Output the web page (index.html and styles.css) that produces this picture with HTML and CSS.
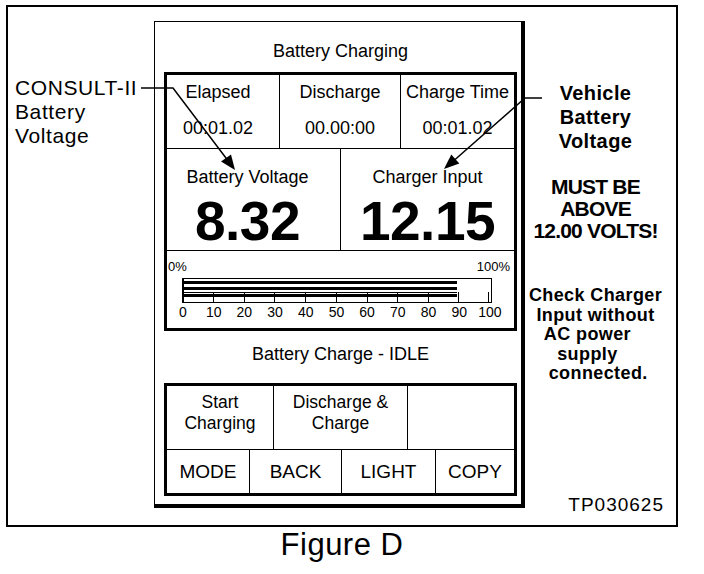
FILE: index.html
```html
<!DOCTYPE html>
<html lang="en">
<head>
    <meta charset="UTF-8">
    <title>Figure D - Battery Charging</title>
    <link rel="stylesheet" href="styles.css">
</head>
<body>
<div class="page">
    <div class="sheet">
        <div class="callout-left">CONSULT-II<br>Battery<br>Voltage</div>

        <div class="device">
            <div class="screen-title">Battery Charging</div>

            <div class="panel readings">
                <div class="timers">
                    <div class="cell timer first">
                        <div class="label">Elapsed</div>
                        <div class="value">00:01.02</div>
                    </div>
                    <div class="cell timer">
                        <div class="label">Discharge</div>
                        <div class="value">00.00:00</div>
                    </div>
                    <div class="cell timer">
                        <div class="label">Charge Time</div>
                        <div class="value">00:01.02</div>
                    </div>
                </div>
                <div class="volts">
                    <div class="cell volt first">
                        <div class="label">Battery Voltage</div>
                        <div class="big">8.32</div>
                    </div>
                    <div class="cell volt">
                        <div class="label">Charger Input</div>
                        <div class="big">12.15</div>
                    </div>
                </div>
                <div class="progress">
                    <div class="pct"><span>0%</span><span>100%</span></div>
                    <svg class="bar" width="310" height="25" viewBox="0 0 310 25">
                        <rect x="0.5" y="0.5" width="309" height="24" fill="none" stroke="#000" stroke-width="1"/>
                        <line x1="1.5" y1="1" x2="1.5" y2="24" stroke="#000" stroke-width="1"/>
                        <rect x="2" y="3" width="273" height="3" fill="#000"/>
                        <rect x="2" y="9" width="273" height="3" fill="#000"/>
                        <rect x="2" y="14" width="273" height="1" fill="#000"/>
                        <rect x="2" y="16" width="273" height="3" fill="#000"/>
                        <g stroke="#000" stroke-width="1">
                            <line x1="31.5" y1="14" x2="31.5" y2="24"/>
                            <line x1="62.5" y1="14" x2="62.5" y2="24"/>
                            <line x1="92.5" y1="14" x2="92.5" y2="24"/>
                            <line x1="123.5" y1="14" x2="123.5" y2="24"/>
                            <line x1="154.5" y1="14" x2="154.5" y2="24"/>
                            <line x1="185.5" y1="14" x2="185.5" y2="24"/>
                            <line x1="215.5" y1="14" x2="215.5" y2="24"/>
                            <line x1="246.5" y1="14" x2="246.5" y2="24"/>
                            <line x1="276.5" y1="14" x2="276.5" y2="24"/>
                            <line x1="306.5" y1="14" x2="306.5" y2="24"/>
                        </g>
                    </svg>
                    <div class="ticks">
                        <span>0</span><span>10</span><span>20</span><span>30</span>
                        <span>40</span><span>50</span><span>60</span><span>70</span>
                        <span>80</span><span>90</span><span>100</span>
                    </div>
                </div>
            </div>

            <div class="status">Battery Charge - IDLE</div>

            <div class="panel buttons">
                <div class="btn-row actions">
                    <div class="btn">Start<br>Charging</div>
                    <div class="btn">Discharge &amp;<br>Charge</div>
                    <div class="btn"></div>
                </div>
                <div class="btn-row keys">
                    <div class="btn">MODE</div>
                    <div class="btn">BACK</div>
                    <div class="btn">LIGHT</div>
                    <div class="btn">COPY</div>
                </div>
            </div>
        </div>

        <div class="callout-right">
            <div class="vehicle">Vehicle<br>Battery<br>Voltage</div>
            <div class="must">MUST BE<br>ABOVE<br>12.00 VOLTS!</div>
            <div class="check">Check Charger
Input without
AC power   
supply   
 connected.</div>
            <div class="tp">TP030625</div>
        </div>
    </div>

    <div class="caption">Figure D</div>

    <!-- leader lines with arrows, drawn over the screen -->
    <svg class="leaders" width="704" height="574" viewBox="0 0 704 574">
        <polyline points="141,88 173,88 229,162" fill="none" stroke="#000" stroke-width="1.5"/>
        <polygon points="235,170 221,161.6 231,154.4" fill="#000"/>
        <polyline points="542,98 525,98 450,164" fill="none" stroke="#000" stroke-width="1.5"/>
        <polygon points="444,169 451.3,154.6 459.3,163.6" fill="#000"/>
    </svg>
</div>
</body>
</html>
```

FILE: styles.css
```css
body {
    margin: 0;
    background-color: #fff;
    color: #000;
    font-family: 'Liberation Sans', Arial, sans-serif;
}

.page {
    position: relative;
    width: 704px;
    height: 574px;
    padding: 5px 0 0 6px;
    box-sizing: border-box;
}

.sheet {
    width: 672px;
    height: 522px;
    border: 2px solid #000;
    box-sizing: border-box;
    display: flex;
}

/* left note */
.callout-left {
    width: 146px;
    padding: 69px 0 0 7px;
    box-sizing: border-box;
    font-size: 21px;
    line-height: 24px;
    letter-spacing: 0.6px;
}

/* the scan tool screen */
.device {
    width: 371px;
    height: 487px;
    margin-top: 14px;
    border-style: solid;
    border-color: #000;
    border-width: 1px 4px 4px 1px;
    box-sizing: border-box;
    padding: 0 4px 0 9px;
    display: flex;
    flex-direction: column;
}

.screen-title {
    text-align: center;
    font-size: 18px;
    line-height: 20px;
    padding-top: 19px;
    margin-bottom: 11px;
}

.panel {
    border: 3px solid #000;
    box-sizing: border-box;
}

.readings {
    height: 259px;
}

.timers {
    display: grid;
    grid-template-columns: 113px 121px 1fr;
    height: 74px;
    border-bottom: 1px solid #000;
    box-sizing: border-box;
}

.cell {
    border-right: 1px solid #000;
    text-align: center;
    font-size: 18px;
    line-height: 20px;
}

.cell:last-child {
    border-right: none;
}

.timer {
    padding-top: 7px;
}

.timer.first {
    padding-right: 10px;
}

.timer .value {
    margin-top: 16px;
}

.volts {
    display: grid;
    grid-template-columns: 174px 1fr;
    height: 102px;
    border-bottom: 1px solid #000;
    box-sizing: border-box;
}

.volt {
    padding-top: 18px;
}

.volt.first {
    padding-right: 12px;
}

.big {
    margin-top: 7px;
    font-size: 55px;
    line-height: 55px;
    font-weight: bold;
    letter-spacing: -0.5px;
}

.progress {
    height: 76px;
    padding-top: 8px;
    box-sizing: border-box;
}

.pct {
    display: flex;
    justify-content: space-between;
    padding: 0 4px 0 1px;
    font-size: 13px;
    line-height: 15px;
}

.bar {
    display: block;
    margin: 4px 0 0 15px;
}

.ticks {
    display: flex;
    justify-content: space-between;
    width: 337px;
    margin: 1px 0 0 1px;
    font-size: 14px;
    line-height: 16px;
}

.ticks span {
    width: 30px;
    text-align: center;
}

.status {
    text-align: center;
    font-size: 18px;
    line-height: 20px;
    padding: 13px 0 19px;
}

.buttons {
    height: 113px;
}

.btn-row {
    display: grid;
}

.actions {
    grid-template-columns: 107px 134px 1fr;
    height: 64px;
    border-bottom: 1px solid #000;
    box-sizing: border-box;
}

.keys {
    grid-template-columns: 83px 92px 94px 1fr;
    height: 43px;
}

.btn {
    border-right: 1px solid #000;
    text-align: center;
}

.btn:last-child {
    border-right: none;
}

.actions .btn {
    font-size: 17.5px;
    line-height: 21px;
    padding-top: 6px;
}

.keys .btn {
    font-size: 19px;
    line-height: 43px;
}

/* right notes */
.callout-right {
    flex: 1;
    display: flex;
    flex-direction: column;
    padding-right: 10px;
    text-align: center;
    font-weight: bold;
}

.vehicle {
    padding-top: 74px;
    font-size: 20px;
    line-height: 24px;
    letter-spacing: 0.4px;
}

.must {
    margin-top: 23px;
    font-size: 21px;
    line-height: 22px;
    letter-spacing: -0.8px;
}

.check {
    margin-top: 44px;
    font-size: 18px;
    line-height: 19.5px;
    letter-spacing: 0.4px;
    white-space: pre;
}

.tp {
    margin-top: auto;
    padding: 0 2px 10px 0;
    text-align: right;
    font-weight: normal;
    font-size: 19px;
    line-height: 20px;
    letter-spacing: 1px;
}

.caption {
    width: 672px;
    text-align: center;
    font-size: 31px;
    line-height: 36px;
    letter-spacing: 0.5px;
}

.leaders {
    position: absolute;
    top: 0;
    left: 0;
    pointer-events: none;
}
```
